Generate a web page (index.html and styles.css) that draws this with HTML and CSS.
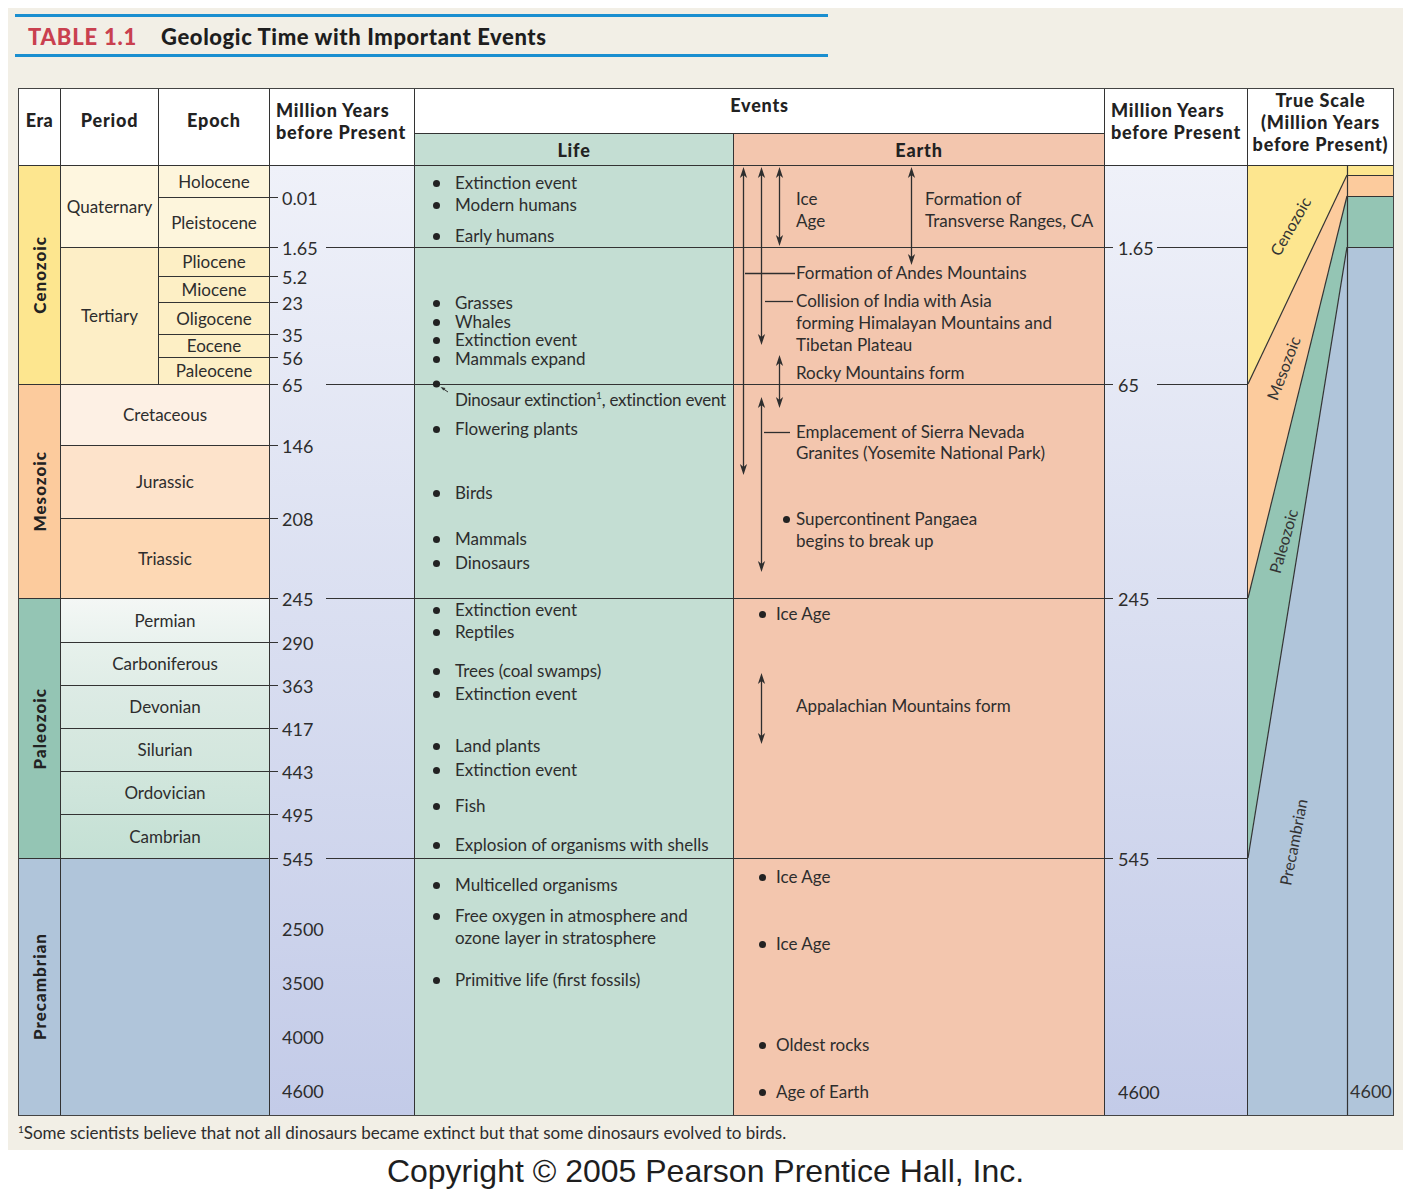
FILE: index.html
```html
<!DOCTYPE html>
<html>
<head>
<meta charset="utf-8">
<title>Geologic Time with Important Events</title>
<link rel="stylesheet" href="styles.css">
</head>
<body>
<div class="sheet">
  <div class="title-bar">
    <span class="tnum">TABLE 1.1</span><span class="tname">Geologic Time with Important Events</span>
  </div>

  <div class="table">
    <div class="h h-era">Era</div>
    <div class="h h-period">Period</div>
    <div class="h h-epoch">Epoch</div>
    <div class="h h-mya">Million Years<br>before Present</div>
    <div class="h h-events">Events</div>
    <div class="h h-mya2">Million Years<br>before Present</div>
    <div class="h h-scale">True Scale<br>(Million Years<br>before Present)</div>
    <div class="h h-life">Life</div>
    <div class="h h-earth">Earth</div>

    <!-- Era column -->
    <div class="col eras">
      <div class="era cen"><span>Cenozoic</span></div>
      <div class="era mes"><span>Mesozoic</span></div>
      <div class="era pal"><span>Paleozoic</span></div>
      <div class="era pre"><span>Precambrian</span></div>
    </div>

    <!-- Period / Epoch columns -->
    <div class="col periods">
      <div class="blk cen-blk">
        <div class="per quat">Quaternary</div>
        <div class="ep q">Holocene</div>
        <div class="ep q">Pleistocene</div>
        <div class="per tert">Tertiary</div>
        <div class="ep t">Pliocene</div>
        <div class="ep t">Miocene</div>
        <div class="ep t">Oligocene</div>
        <div class="ep t">Eocene</div>
        <div class="ep t">Paleocene</div>
      </div>
      <div class="blk mes-blk">
        <div class="pw cret">Cretaceous</div>
        <div class="pw jura">Jurassic</div>
        <div class="pw tria">Triassic</div>
      </div>
      <div class="blk pal-blk">
        <div class="pw p1">Permian</div>
        <div class="pw p2">Carboniferous</div>
        <div class="pw p3">Devonian</div>
        <div class="pw p4">Silurian</div>
        <div class="pw p5">Ordovician</div>
        <div class="pw p6">Cambrian</div>
      </div>
      <div class="blk pre-blk"></div>
    </div>

    <!-- Million years column -->
    <div class="col mya">
      <div class="mr"><span class="tk"><b>0.01</b></span></div>
      <div class="mr"><span class="tk long"><b>1.65</b></span></div>
      <div class="mr"><span class="tk"><b>5.2</b></span></div>
      <div class="mr"><span class="tk"><b>23</b></span></div>
      <div class="mr"><span class="tk"><b>35</b></span></div>
      <div class="mr"><span class="tk"><b>56</b></span></div>
      <div class="mr"><span class="tk long"><b>65</b></span></div>
      <div class="mr"><span class="tk"><b>146</b></span></div>
      <div class="mr"><span class="tk"><b>208</b></span></div>
      <div class="mr"><span class="tk long"><b>245</b></span></div>
      <div class="mr"><span class="tk"><b>290</b></span></div>
      <div class="mr"><span class="tk"><b>363</b></span></div>
      <div class="mr"><span class="tk"><b>417</b></span></div>
      <div class="mr"><span class="tk"><b>443</b></span></div>
      <div class="mr"><span class="tk"><b>495</b></span></div>
      <div class="mr"><span class="tk long"><b>545</b></span></div>
      <div class="mr pre-nums">
        <span>2500</span>
        <span>3500</span>
        <span>4000</span>
        <span>4600</span>
      </div>
    </div>

    <!-- Life column -->
    <div class="col life">
      <div class="seg s1">
        <p class="li g6">Extinction event</p>
        <p class="li">Modern humans</p>
        <p class="li g9">Early humans</p>
      </div>
      <div class="seg s2 tight">
        <p class="li g46">Grasses</p>
        <p class="li">Whales</p>
        <p class="li">Extinction event</p>
        <p class="li">Mammals expand</p>
      </div>
      <div class="seg s3">
        <svg class="dino" width="40" height="20" viewBox="0 0 40 20">
          <circle cx="21.5" cy="4" r="3.6" fill="#222"/>
          <line x1="33" y1="12" x2="27" y2="8" stroke="#333" stroke-width="1"/>
          <path d="M25.5 7 L30.5 8 L28.5 10.5 Z" fill="#333"/>
        </svg>
        <p class="lt g4">Dinosaur extinction<sup>1</sup>, extinction event</p>
        <p class="li g7">Flowering plants</p>
        <p class="li g42">Birds</p>
        <p class="li g24">Mammals</p>
        <p class="li g2">Dinosaurs</p>
      </div>
      <div class="seg s4">
        <p class="li">Extinction event</p>
        <p class="li">Reptiles</p>
        <p class="li g17">Trees (coal swamps)</p>
        <p class="li g1">Extinction event</p>
        <p class="li g30">Land plants</p>
        <p class="li g2">Extinction event</p>
        <p class="li g14">Fish</p>
        <p class="li g17">Explosion of organisms with shells</p>
      </div>
      <div class="seg s5">
        <p class="li g15">Multicelled organisms</p>
        <p class="li g9">Free oxygen in atmosphere and<br>ozone layer in stratosphere</p>
        <p class="li g20">Primitive life (first fossils)</p>
      </div>
    </div>

    <!-- Earth column -->
    <div class="col earth">
      <svg class="arrows" width="370" height="949" viewBox="0 0 370 949">
        <g stroke="#2e2e2e" stroke-width="1.3" fill="none">
          <line x1="9.5" y1="6" x2="9.5" y2="304"/>
          <line x1="27.5" y1="6" x2="27.5" y2="174"/>
          <line x1="45.5" y1="6" x2="45.5" y2="75"/>
          <line x1="177.5" y1="6" x2="177.5" y2="94"/>
          <line x1="45.5" y1="194" x2="45.5" y2="237"/>
          <line x1="27.5" y1="236" x2="27.5" y2="401"/>
          <line x1="27.5" y1="512" x2="27.5" y2="573"/>
          <line x1="11" y1="107.5" x2="61" y2="107.5"/>
          <line x1="31" y1="135.5" x2="59" y2="135.5"/>
          <line x1="30" y1="266.5" x2="56" y2="266.5"/>
        </g>
        <g fill="#2e2e2e">
          <path d="M9.5 1 l3.6 11 l-3.6 -3 l-3.6 3 z"/>
          <path d="M9.5 309 l3.6 -11 l-3.6 3 l-3.6 -3 z"/>
          <path d="M27.5 1 l3.6 11 l-3.6 -3 l-3.6 3 z"/>
          <path d="M27.5 179 l3.6 -11 l-3.6 3 l-3.6 -3 z"/>
          <path d="M45.5 1 l3.6 11 l-3.6 -3 l-3.6 3 z"/>
          <path d="M45.5 80 l3.6 -11 l-3.6 3 l-3.6 -3 z"/>
          <path d="M177.5 1 l3.6 11 l-3.6 -3 l-3.6 3 z"/>
          <path d="M177.5 99 l3.6 -11 l-3.6 3 l-3.6 -3 z"/>
          <path d="M45.5 189 l3.6 11 l-3.6 -3 l-3.6 3 z"/>
          <path d="M45.5 242 l3.6 -11 l-3.6 3 l-3.6 -3 z"/>
          <path d="M27.5 231 l3.6 11 l-3.6 -3 l-3.6 3 z"/>
          <path d="M27.5 406 l3.6 -11 l-3.6 3 l-3.6 -3 z"/>
          <path d="M27.5 507 l3.6 11 l-3.6 -3 l-3.6 3 z"/>
          <path d="M27.5 578 l3.6 -11 l-3.6 3 l-3.6 -3 z"/>
        </g>
      </svg>
      <div class="seg s1">
        <div class="pair g22">
          <p class="ice">Ice<br>Age</p>
          <p>Formation of<br>Transverse Ranges, CA</p>
        </div>
      </div>
      <div class="seg s2">
        <p class="et g14">Formation of Andes Mountains</p>
        <p class="et g6">Collision of India with Asia<br>forming Himalayan Mountains and<br>Tibetan Plateau</p>
        <p class="et g6">Rocky Mountains form</p>
      </div>
      <div class="seg s3">
        <p class="et tight2 g36">Emplacement of Sierra Nevada<br>Granites (Yosemite National Park)</p>
        <p class="et eb2 g45">Supercontinent Pangaea<br>begins to break up</p>
      </div>
      <div class="seg s4">
        <p class="eb g4">Ice Age</p>
        <p class="et g70">Appalachian Mountains form</p>
      </div>
      <div class="seg s5">
        <p class="eb g7">Ice Age</p>
        <p class="eb g45">Ice Age</p>
        <p class="eb g79">Oldest rocks</p>
        <p class="eb g25">Age of Earth</p>
      </div>
    </div>

    <!-- Million years (right) -->
    <div class="col mya2">
      <div class="mr2 r1"><span class="tk long"><b>1.65</b></span></div>
      <div class="mr2 r2"><span class="tk long"><b>65</b></span></div>
      <div class="mr2 r3"><span class="tk long"><b>245</b></span></div>
      <div class="mr2 r4"><span class="tk long"><b>545</b></span></div>
      <div class="mr2 r5"><span class="last">4600</span></div>
    </div>

    <!-- True scale -->
    <div class="col scale">
      <svg width="145" height="949" viewBox="0 0 145 949">
        <polygon points="0,0 99,0 99,9 0,218" fill="#fde68f"/>
        <polygon points="99,9 99,30 0,432 0,218" fill="#fccb9d"/>
        <polygon points="99,30 99,81 0,692 0,432" fill="#94c5b4"/>
        <polygon points="99,81 99,949 0,949 0,692" fill="#b0c5da"/>
        <rect x="99" y="0" width="46" height="9" fill="#fde68f"/>
        <rect x="99" y="9" width="46" height="21" fill="#fccb9d"/>
        <rect x="99" y="30" width="46" height="51" fill="#94c5b4"/>
        <rect x="99" y="81" width="46" height="868" fill="#b0c5da"/>
        <g stroke="#333" stroke-width="1.2">
          <line x1="99.5" y1="0" x2="99.5" y2="949"/>
          <line x1="99" y1="9.5" x2="145" y2="9.5"/>
          <line x1="99" y1="30.5" x2="145" y2="30.5"/>
          <line x1="99" y1="81.5" x2="145" y2="81.5"/>
          <line x1="99" y1="9" x2="0" y2="218"/>
          <line x1="99" y1="30" x2="0" y2="432"/>
          <line x1="99" y1="81" x2="0" y2="692"/>
        </g>
        <g class="slabel" fill="#333">
          <text x="42" y="60" transform="rotate(-60 42 60)">Cenozoic</text>
          <text x="35" y="202" transform="rotate(-69 35 202)">Mesozoic</text>
          <text x="35" y="375" transform="rotate(-74 35 375)">Paleozoic</text>
          <text x="45" y="676" transform="rotate(-79 45 676)">Precambrian</text>
        </g>
        <text class="snum" x="102" y="932" fill="#333">4600</text>
      </svg>
    </div>
  </div>

  <p class="foot"><sup>1</sup>Some scientists believe that not all dinosaurs became extinct but that some dinosaurs evolved to birds.</p>
</div>
<div class="copy">Copyright © 2005 Pearson Prentice Hall, Inc.</div>
</body>
</html>
```

FILE: styles.css
```css
* { box-sizing: border-box; margin: 0; padding: 0; }

body {
  background: #ffffff;
  font-family: Lato, "Liberation Sans", sans-serif;
  color: #2d2d2d;
}

.sheet {
  margin: 8px 8px 0;
  width: 1395px;
  background: #f2efe6;
  padding: 6px 0 7px;
}

.title-bar {
  margin-left: 7px;
  width: 813px;
  height: 43px;
  border-top: 3px solid #1b8fd0;
  border-bottom: 3px solid #1b8fd0;
  display: flex;
  align-items: center;
  padding: 2px 0 0 13px;
  font-weight: 900;
  font-size: 22px;
  letter-spacing: 0.6px;
}
.tnum { color: #c9404f; letter-spacing: 0.8px; margin-right: 24px; }
.tname { color: #1e1e1e; }

/* ---------- table grid ---------- */
.table {
  margin: 31px 0 0 10px;
  width: 1376px;
  border: 1px solid #444;
  display: grid;
  grid-template-columns: 42px 98px 111px 145px 319px 371px 143px 145px;
  grid-template-rows: 45px 32px 949px;
  background: #fff;
}

.h {
  background: #fff;
  border-right: 1px solid #333;
  border-bottom: 1px solid #333;
  font-weight: 900;
  font-size: 18px;
  line-height: 22px;
  letter-spacing: 0.8px;
  color: #222;
  display: flex;
  align-items: center;
  justify-content: center;
  padding-bottom: 14px;
}
.h-era { grid-column: 1; grid-row: 1 / 3; letter-spacing: 0.4px; }
.h-period { grid-column: 2; grid-row: 1 / 3; }
.h-epoch { grid-column: 3; grid-row: 1 / 3; }
.h-mya, .h-mya2 { grid-row: 1 / 3; justify-content: flex-start; padding-left: 6px; padding-bottom: 12px; white-space: nowrap; }
.h-mya { grid-column: 4; }
.h-mya2 { grid-column: 7; }
.h-events { grid-column: 5 / 7; grid-row: 1; padding-bottom: 12px; }
.h-scale { grid-column: 8; grid-row: 1 / 3; border-right: none; text-align: center; padding-bottom: 10px; white-space: nowrap; }
.h-life { grid-column: 5; grid-row: 2; background: #c4ded3; padding-bottom: 0; }
.h-earth { grid-column: 6; grid-row: 2; background: #f3c6ae; padding-bottom: 0; }

.col {
  grid-row: 3;
  border-right: 1px solid #333;
  position: relative;
  font-size: 17px;
  line-height: 22px;
}

/* ---------- era column ---------- */
.eras { grid-column: 1; display: flex; flex-direction: column; }
.era {
  display: flex;
  align-items: center;
  justify-content: center;
  border-bottom: 1px solid #333;
  font-weight: 900;
  font-size: 17px;
  letter-spacing: 1px;
  color: #222;
}
.era span { writing-mode: vertical-rl; transform: rotate(180deg); }
.era.cen { height: 219px; background: #fde68f; }
.era.mes { height: 214px; background: #fccb9d; }
.era.pal { height: 260px; background: #94c5b4; }
.era.pre { height: 256px; background: #b0c5da; border-bottom: none; }

/* ---------- period / epoch ---------- */
.periods { grid-column: 2 / 4; display: flex; flex-direction: column; }
.blk { display: grid; }
.cen-blk {
  height: 219px;
  grid-template-columns: 98px 110px;
  grid-template-rows: 32px 50px 29px 26px 32px 23px 27px;
}
.per, .ep, .pw {
  display: flex;
  align-items: center;
  justify-content: center;
  border-bottom: 1px solid #333;
}
.per { grid-column: 1; border-right: 1px solid #333; }
.quat { grid-row: 1 / 3; background: #fef6df; }
.tert { grid-row: 3 / 8; background: #fdeec6; }
.ep { grid-column: 2; }
.ep.q { background: #fdf5dc; }
.ep.t { background: #fdefc5; }

.mes-blk { height: 214px; grid-template-rows: 61px 73px 80px; }
.cret { background: #fdf0e4; }
.jura { background: #fde3cb; }
.tria { background: #fdd8b4; }

.pal-blk { height: 260px; grid-template-rows: 44px 43px 43px 43px 43px 44px; }
.p1 { background: linear-gradient(#f4f7f5, #e9f2ee); }
.p2 { background: linear-gradient(#e7f1ec, #e0ede7); }
.p3 { background: linear-gradient(#ddebe5, #d8e9e1); }
.p4 { background: linear-gradient(#d7e8e0, #d2e6dd); }
.p5 { background: linear-gradient(#d1e6dc, #cbe3d9); }
.p6 { background: linear-gradient(#cae3d8, #c4e0d4); }

.pre-blk { height: 256px; background: #b0c5da; }

/* ---------- million years columns ---------- */
.mya, .mya2 { background: linear-gradient(#eff1f9, #c3cbe8); }
.mya {
  grid-column: 4;
  display: grid;
  grid-template-rows: 32px 50px 29px 26px 32px 23px 27px 61px 73px 80px 44px 43px 43px 43px 43px 44px 256px;
}
.mr, .mr2 { position: relative; }

.tk {
  position: absolute;
  left: 0;
  right: 0;
  bottom: -10px;
  height: 21px;
  display: flex;
  align-items: center;
  font-size: 18px;
  z-index: 2;
}
.tk::before {
  content: "";
  width: 8px;
  height: 1px;
  background: #333;
  flex: none;
}
.tk b {
  font-weight: 400;
  margin-left: 4px;
  width: 44px;
  flex: none;
}
.tk.long::after {
  content: "";
  flex: 1;
  height: 1px;
  background: #333;
}

.pre-nums {
  display: flex;
  flex-direction: column;
  padding: 59px 0 0 12px;
  font-size: 18px;
}
.pre-nums span + span { margin-top: 32px; }

.mya2 { grid-column: 7; display: flex; flex-direction: column; }
.mya2 .tk b { margin-left: 5px; width: 39px; }
.r1 { height: 82px; }
.r2 { height: 137px; }
.r3 { height: 214px; }
.r4 { height: 260px; }
.r5 { height: 256px; padding: 222px 0 0 13px; font-size: 18px; }

/* ---------- events ---------- */
.life { grid-column: 5; background: #c4ded3; display: flex; flex-direction: column; }
.earth { grid-column: 6; background: #f3c6ae; display: flex; flex-direction: column; }

.seg { border-bottom: 1px solid #333; position: relative; }
.s1 { height: 82px; }
.s2 { height: 137px; }
.s3 { height: 214px; }
.s4 { height: 260px; }
.s5 { height: 256px; border-bottom: none; }

.li, .lt { position: relative; padding-left: 40px; white-space: nowrap; }
.lt { letter-spacing: -0.25px; }
.li::before {
  content: "";
  position: absolute;
  left: 18px;
  top: 8px;
  width: 7px;
  height: 7px;
  border-radius: 50%;
  background: #222;
}
.tight { line-height: 18.5px; }
.tight .li::before { top: 6px; }
sup { font-size: 10px; line-height: 0; vertical-align: 7px; }

.dino { position: absolute; left: 0; top: -5px; z-index: 3; }

.arrows { position: absolute; left: 0; top: 0; z-index: 3; }

.pair { display: flex; }
.pair .ice { width: 191px; padding-left: 62px; }
.et { padding-left: 62px; position: relative; white-space: nowrap; }
.eb { position: relative; padding-left: 42px; }
.eb::before, .eb2::before {
  content: "";
  position: absolute;
  left: 25px;
  top: 8px;
  width: 7px;
  height: 7px;
  border-radius: 50%;
  background: #222;
}
.eb2::before { left: 49px; }
.tight2 { line-height: 21px; }

/* vertical gaps on the time scale */
.g1 { margin-top: 1px; }
.g2 { margin-top: 2px; }
.g4 { margin-top: 4px; }
.g6 { margin-top: 6px; }
.g7 { margin-top: 7px; }
.g9 { margin-top: 9px; }
.g14 { margin-top: 14px; }
.g15 { margin-top: 15px; }
.g17 { margin-top: 17px; }
.g20 { margin-top: 20px; }
.g22 { margin-top: 22px; }
.g24 { margin-top: 24px; }
.g25 { margin-top: 25px; }
.g30 { margin-top: 30px; }
.g36 { margin-top: 36px; }
.g42 { margin-top: 42px; }
.g45 { margin-top: 45px; }
.g46 { margin-top: 46px; }
.g70 { margin-top: 70px; }
.g79 { margin-top: 79px; }

/* ---------- true scale ---------- */
.scale { grid-column: 8; border-right: none; }
.scale svg { display: block; }
.slabel text { font-family: Lato, "Liberation Sans", sans-serif; font-size: 16px; text-anchor: middle; dominant-baseline: central; }
.snum { font-family: Lato, "Liberation Sans", sans-serif; font-size: 18px; }

/* ---------- footer ---------- */
.foot {
  margin: 7px 0 0 10px;
  font-size: 17px;
  line-height: 20px;
  color: #2d2d2d;
}
.foot sup { vertical-align: 6px; font-size: 10px; }

.copy {
  margin-top: 3px;
  width: 1411px;
  text-align: center;
  font-family: "Liberation Sans", Arial, sans-serif;
  font-size: 32px;
  line-height: 36px;
  color: #1e1e1e;
}
```
